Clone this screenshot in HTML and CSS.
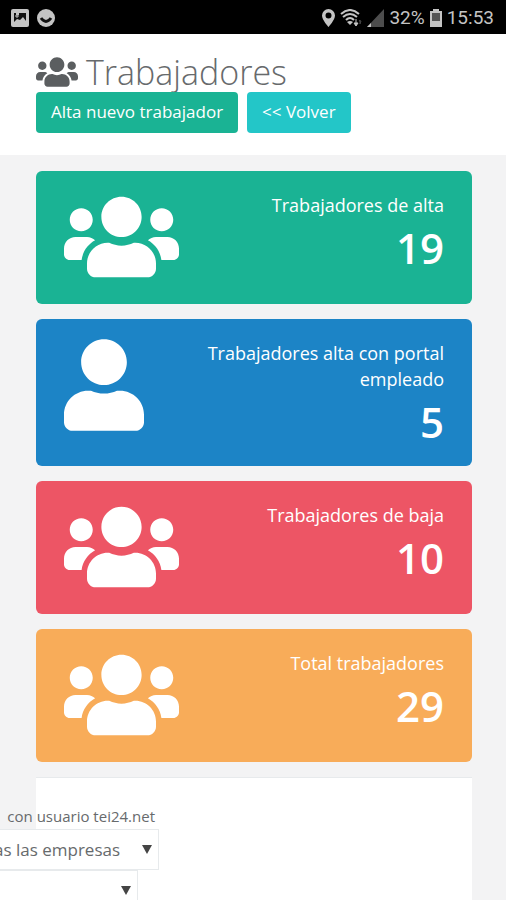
FILE: index.html
```
<!DOCTYPE html>
<html lang="es">
<head>
    <meta charset="UTF-8">
    <meta name="viewport" content="width=device-width, initial-scale=1.0">
    <title>Trabajadores</title>
    <link rel="stylesheet" href="styles.css">
</head>
<body>
    <!-- Shared icons -->
    <svg class="sprite" aria-hidden="true">
        <symbol id="icon-users" viewBox="0 0 640 512">
            <path d="M96 224c35.3 0 64-28.7 64-64s-28.7-64-64-64-64 28.7-64 64 28.7 64 64 64zm448 0c35.3 0 64-28.7 64-64s-28.7-64-64-64-64 28.7-64 64 28.7 64 64 64zm32 32h-64c-17.6 0-33.5 7.1-45.1 18.6 40.3 22.1 68.9 62 75.1 109.4h66c17.7 0 32-14.3 32-32v-32c0-35.3-28.7-64-64-64zm-256 0c61.9 0 112-50.1 112-112S381.9 32 320 32 208 82.1 208 144s50.1 112 112 112zm76.8 32h-8.3c-20.8 10-43.9 16-68.5 16s-47.6-6-68.5-16h-8.3C179.6 288 128 339.6 128 403.2V432c0 26.5 21.5 48 48 48h288c26.5 0 48-21.5 48-48v-28.8c0-63.6-51.6-115.2-115.2-115.2zm-223.7-13.4C161.5 263.1 145.6 256 128 256H64c-35.3 0-64 28.7-64 64v32c0 17.7 14.3 32 32 32h65.9c6.3-47.4 34.9-87.3 75.2-109.4z"/>
        </symbol>
        <symbol id="icon-user" viewBox="0 0 448 512">
            <path d="M224 256c70.7 0 128-57.3 128-128S294.7 0 224 0 96 57.3 96 128s57.3 128 128 128zm89.6 32h-16.7c-22.2 10.2-46.9 16-72.9 16s-50.6-5.8-72.9-16h-16.7C60.2 288 0 348.2 0 422.4V464c0 26.5 21.5 48 48 48h352c26.5 0 48-21.5 48-48v-41.6c0-74.2-60.2-134.4-134.4-134.4z"/>
        </symbol>
    </svg>

    <!-- Status Bar -->
    <div class="status-bar">
        <div class="status-group">
            <svg width="18" height="18" viewBox="0 0 18 18">
                <rect width="18" height="18" rx="2" fill="#c4c4c4"/>
                <path d="M3 4h2v2h3V4h7v8l-3-4-3 3-3-1-3 3z" fill="#111"/>
                <path d="M4 7h4M6 5v4" stroke="#c4c4c4"/>
            </svg>
            <svg width="18" height="18" viewBox="0 0 18 18">
                <circle cx="9" cy="9" r="9" fill="#c4c4c4"/>
                <path d="M4 9q5 7 10 0" fill="none" stroke="#111" stroke-width="3"/>
            </svg>
        </div>
        <div class="status-group status-right">
            <svg width="13" height="18" viewBox="0 0 13 18">
                <path fill="#c4c4c4" fill-rule="evenodd" d="M6.500 0a6.500 6.500 0 0 0-6.500 6.500C0 11 6.500 18 6.500 18S13 11 13 6.500A6.500 6.500 0 0 0 6.500 0zm0 3.500a3 3 0 1 1 0 6 3 3 0 0 1 0-6z"/>
            </svg>
            <svg width="22" height="18" viewBox="0 0 22 18">
                <g fill="none" stroke="#c4c4c4" stroke-width="2">
                    <path d="M1 5q9-8 18 0M3 8q7-6 14 0M6 11q4-4 8 0"/>
                </g>
                <path d="M10 16l-3-3q3-2 6 0z" fill="#c4c4c4"/>
                <path d="M16 10v4h-2l2 3 2-3h-2" fill="#c4c4c4" stroke="#c4c4c4"/>
                <path d="M20 15v-4l-1 1h2z" fill="none" stroke="#444"/>
            </svg>
            <svg width="17" height="18" viewBox="0 0 17 18">
                <path d="M17 0v18H0z" fill="#4d4d4d"/>
                <path d="M4 14v4H0z" fill="#c4c4c4"/>
            </svg>
            <span>32%</span>
            <svg width="12" height="18" viewBox="0 0 12 18">
                <path d="M3 0h6v2h3v16H0V2h3z" fill="#c4c4c4"/>
                <path d="M2 4h8v8H2z" fill="#555"/>
            </svg>
            <span>15:53</span>
        </div>
    </div>

    <!-- Page Header -->
    <header class="page-header">
        <h1 class="page-title">
            <svg class="title-icon" aria-hidden="true"><use href="#icon-users"/></svg>
            Trabajadores
        </h1>
        <div class="actions">
            <button type="button" class="button button-primary">Alta nuevo trabajador</button>
            <button type="button" class="button button-info">&lt;&lt; Volver</button>
        </div>
    </header>

    <main class="content">
        <!-- Summary Cards -->
        <section class="card card-green">
            <svg class="card-icon" aria-hidden="true"><use href="#icon-users"/></svg>
            <div class="card-text">
                <span class="card-label">Trabajadores de alta</span>
                <strong class="card-number">19</strong>
            </div>
        </section>
        <section class="card card-blue">
            <svg class="card-icon card-icon-single" aria-hidden="true"><use href="#icon-user"/></svg>
            <div class="card-text">
                <span class="card-label">Trabajadores alta con portal empleado</span>
                <strong class="card-number">5</strong>
            </div>
        </section>
        <section class="card card-red">
            <svg class="card-icon" aria-hidden="true"><use href="#icon-users"/></svg>
            <div class="card-text">
                <span class="card-label">Trabajadores de baja</span>
                <strong class="card-number">10</strong>
            </div>
        </section>
        <section class="card card-orange">
            <svg class="card-icon" aria-hidden="true"><use href="#icon-users"/></svg>
            <div class="card-text">
                <span class="card-label">Total trabajadores</span>
                <strong class="card-number">29</strong>
            </div>
        </section>

        <!-- Filters -->
        <section class="panel">
            <form class="filters">
                <label class="filter-label" for="company">con usuario tei24.net</label>
                <select class="filter-select" id="company">
                    <option>Todas las empresas</option>
                </select>
                <select class="filter-select filter-center" aria-label="Centro">
                    <option></option>
                </select>
            </form>
        </section>
    </main>
</body>
</html>
```
FILE: styles.css
```
:root {
    --green: #1ab394;
    --teal: #23c6c8;
    --blue: #1c84c6;
    --red: #ed5565;
    --orange: #f8ac59;
    --background: #f3f3f4;
    --border: #e7eaec;
    --text: #676a6c;
}

* {
    box-sizing: border-box;
}

body {
    margin: 0;
    background: var(--background);
    color: var(--text);
    font-family: "Open Sans", "Liberation Sans", sans-serif;
    font-size: 18px;
    line-height: 26px;
    overflow-x: hidden;
}

.sprite {
    display: none;
}

/* Status Bar */
.status-bar {
    display: flex;
    justify-content: space-between;
    align-items: center;
    height: 34px;
    padding: 2px 12px 0 11px;
    background: #000000;
    color: #c4c4c4;
    font-family: Roboto, sans-serif;
    font-size: 19px;
}

.status-group {
    display: flex;
    align-items: center;
    gap: 8px;
}

.status-right {
    gap: 5px;
}

/* Page Header */
.page-header {
    padding: 18px 34px 22px 36px;
    background: #ffffff;
}

.page-title {
    display: flex;
    align-items: center;
    gap: 8px;
    margin: 0;
    font-size: 34px;
    font-weight: 300;
    line-height: 40px;
}

.title-icon {
    width: 42px;
    height: 34px;
    fill: #5b5e60;
}

.actions {
    display: flex;
    gap: 9px;
}

.button {
    padding: 7px 15px 8px;
    border: none;
    border-radius: 4px;
    color: #ffffff;
    font-family: inherit;
    font-size: 17px;
    line-height: 26px;
    cursor: pointer;
}

.button-primary {
    background: var(--green);
}

.button-info {
    background: var(--teal);
}

/* Summary Cards */
.content {
    display: flex;
    flex-direction: column;
    gap: 15px;
    padding: 16px 34px 0 36px;
}

.card {
    display: flex;
    justify-content: space-between;
    align-items: flex-start;
    gap: 28px;
    padding: 20px 28px 21px;
    border-radius: 6px;
    color: #ffffff;
}

.card-green {
    background: var(--green);
}

.card-blue {
    background: var(--blue);
}

.card-red {
    background: var(--red);
}

.card-orange {
    background: var(--orange);
}

.card-icon {
    flex: none;
    width: 115px;
    height: 92px;
    fill: currentColor;
}

.card-icon-single {
    width: 80px;
}

.card-text {
    display: flex;
    flex-direction: column;
    gap: 7px;
    padding-top: 1px;
    text-align: right;
}

.card-number {
    font-size: 42px;
    font-weight: 600;
    line-height: 46px;
}

/* Filters */
.panel {
    padding: 25px 0;
    border-top: 1px solid var(--border);
    background: #ffffff;
}

.filters {
    display: flex;
    flex-direction: column;
    align-items: flex-end;
    width: 300px;
    margin-left: -177px;
}

.filter-label {
    padding-right: 4px;
    font-size: 15px;
}

.filter-select {
    appearance: none;
    height: 41px;
    padding: 6px 37px 6px 14px;
    border: 1px solid var(--border);
    border-radius: 0;
    background: #ffffff url("data:image/svg+xml,%3Csvg xmlns='http://www.w3.org/2000/svg' width='10' height='9'%3E%3Cpath d='M0 0h10L5 9z' fill='%23444'/%3E%3C/svg%3E") no-repeat right 6px center;
    color: var(--text);
    font-family: inherit;
    font-size: 17px;
}

.filter-center {
    width: 200px;
    margin-right: 21px;
}
```
